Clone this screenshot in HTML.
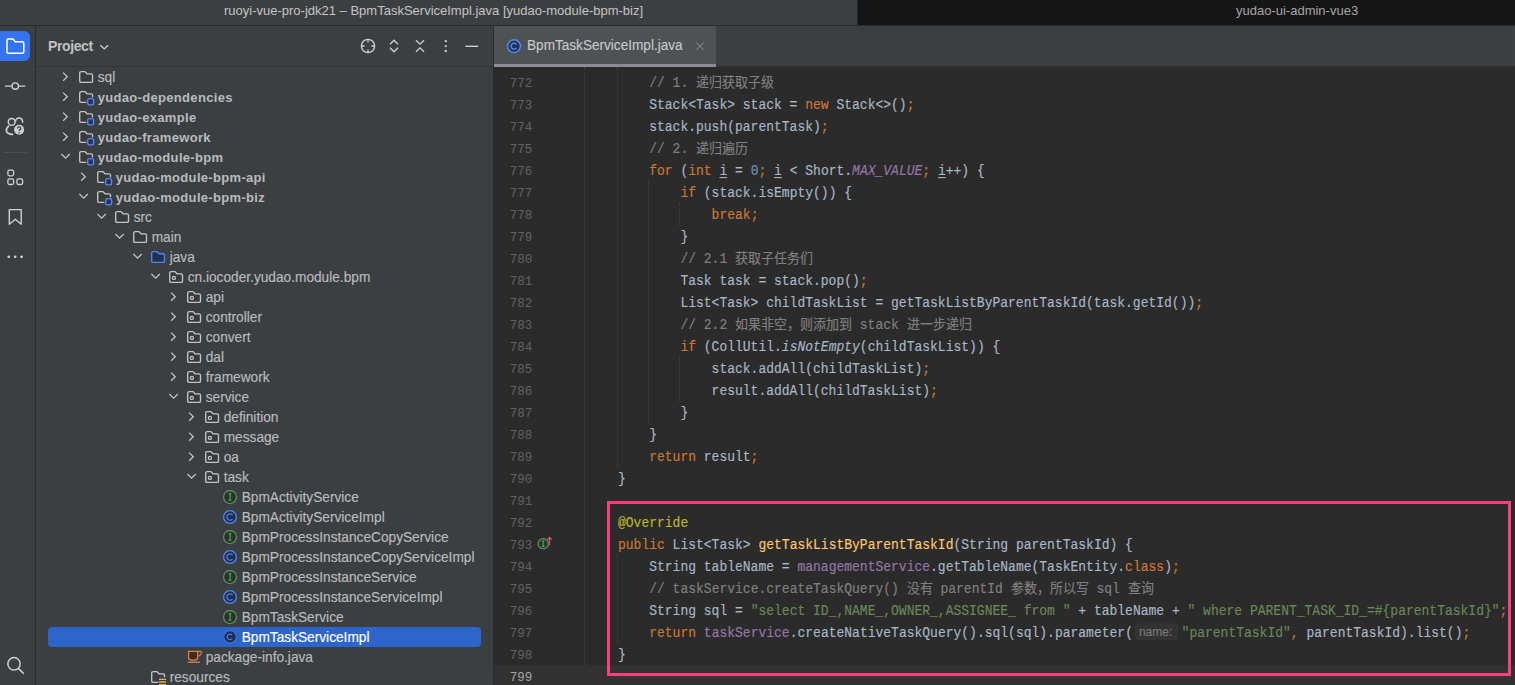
<!DOCTYPE html><html lang="zh-CN"><head><meta charset="utf-8"><style>
*{margin:0;padding:0;box-sizing:border-box}
html,body{width:1515px;height:685px;overflow:hidden;background:#2b2b2b}
body{position:relative;font-family:"Liberation Sans",sans-serif}
.abs{position:absolute}
#title{position:absolute;left:0;top:0;width:858px;height:25px;background:#3c3f41}
#title2{position:absolute;left:858px;top:0;width:657px;height:25px;background:#151515}
#tline{position:absolute;left:0;top:25px;width:1515px;height:1px;background:#2a2a2a}
.ttl{position:absolute;top:-2px;height:25px;line-height:25px;font-size:13px;color:#c4c4c4;white-space:nowrap}
#tb{position:absolute;left:0;top:26px;width:35px;height:659px;background:#3c3f41}
#tbline{position:absolute;left:35px;top:26px;width:1px;height:659px;background:#2b2b2b}
#proj{position:absolute;left:36px;top:26px;width:457px;height:659px;background:#3c3f41}
#pline{position:absolute;left:493px;top:26px;width:1px;height:659px;background:#2b2b2b}
#phline{position:absolute;left:36px;top:66px;width:457px;height:1px;background:#323435}
#tabbar{position:absolute;left:494px;top:26px;width:1021px;height:41px;background:#3c3f41}
#tab{position:absolute;left:494px;top:26px;width:222px;height:41px;background:#4e5254}
#tabul{position:absolute;left:494px;top:64px;width:222px;height:3px;background:#8a8e92}
#editor{position:absolute;left:494px;top:67px;width:1021px;height:618px;background:#2b2b2b;overflow:hidden}
.tt{position:absolute;height:20px;line-height:20px;margin-top:0.7px;transform:scaleY(1.08);transform-origin:0 14.75px;-webkit-text-stroke:0.15px currentColor;font-size:13.7px;color:#b9bbbe;white-space:nowrap}
.tt.b{font-weight:bold;font-size:13.4px;transform:none;-webkit-text-stroke:0;letter-spacing:0.32px;font-size:13.0px;color:#b9bbbe}
.tt.w{color:#ffffff}
.ic{position:absolute;width:16px;height:16px}
.rs{position:absolute;overflow:visible}
.sel{position:absolute;left:48px;width:433px;height:20px;border-radius:4px;background:#2e65ca}
.ln{position:absolute;left:494px;width:38.3px;text-align:right;font-family:"Liberation Mono",monospace;font-size:12.5px;line-height:26px;height:22px;color:#606366;white-space:pre}
.cl{position:absolute;font-family:"Liberation Mono",monospace;font-size:13px;line-height:26px;height:22px;color:#a9b7c6;white-space:pre;transform:scaleY(1.06);transform-origin:0 16.5px;-webkit-text-stroke:0.15px currentColor}
.ig{position:absolute;width:1px;border-left:1px dotted #434343}
.ln.cur{color:#a4a3a3}
.u{text-decoration:underline;text-underline-offset:2px}
.hint{display:inline-block;font-family:"Liberation Sans",sans-serif;font-size:12px;color:#7a7a7a;background:#333333;border-radius:3px;height:16px;line-height:16px;padding:0 5.5px 0 4px;margin:0 3.8px 0 2px;vertical-align:1px}
#curline{position:absolute;left:494px;top:665px;width:1021px;height:22px;background:#323232}
#gutline{position:absolute;left:584px;top:67px;width:1px;height:598px;border-left:1px dotted #424242}
#box{position:absolute;left:607px;top:500.8px;width:904px;height:174.9px;border:3.8px solid #fa3e7e}
</style></head><body>
<div id="title"></div><div id="title2"></div><div class="abs" style="left:857px;top:0;width:1px;height:25px;background:#2c2c2c"></div><div id="tline"></div>
<div class="ttl" style="left:224px">ruoyi-vue-pro-jdk21 – BpmTaskServiceImpl.java [yudao-module-bpm-biz]</div>
<div class="ttl" style="left:1236px;color:#a6a6a6">yudao-ui-admin-vue3</div>
<div id="tb"></div><div id="tbline"></div><div id="proj"></div><div id="pline"></div><div id="phline"></div>
<div id="tabbar"></div><div class="abs" style="left:716px;top:66px;width:799px;height:1px;background:#303233"></div><div class="abs" style="left:1513px;top:26px;width:1px;height:40px;background:#46494b"></div><div id="tab"></div><div id="tabul"></div>
<div id="editor"></div><div id="curline"></div><div id="gutline"></div>
<div class="abs" style="left:48px;top:36px;font-size:14px;font-weight:bold;color:#bfc1c3;line-height:20px;letter-spacing:-0.4px">Project</div>
<div class="abs" style="left:0;top:31px;width:30px;height:30px;background:#3574f0;border-radius:0 6px 6px 0"></div>
<svg class="abs" style="left:0;top:0" width="36" height="685" viewBox="0 0 36 685"><path d="M7 40.5Q7 39 8.5 39H13L15.3 41.8H22.3Q23.8 41.8 23.8 43.3V51.7Q23.8 53.2 22.3 53.2H8.5Q7 53.2 7 51.7Z" fill="none" stroke="#ffffff" stroke-width="1.5" stroke-linejoin="round"/><path d="M5 86.1H11.6M18.9 86.1H25.3" stroke="#ced0d3" stroke-width="1.4"/><circle cx="15.25" cy="86.1" r="3.2" fill="none" stroke="#ced0d3" stroke-width="1.4"/><circle cx="11.7" cy="121.9" r="3.4" fill="none" stroke="#ced0d3" stroke-width="1.5"/><path d="M15.6 121.4A3.5 3.5 0 0 1 22.6 121.4V122.8" fill="none" stroke="#ced0d3" stroke-width="1.5"/><path d="M8.6 126.2Q5.6 128.6 6.6 131.6Q7.8 134.2 12.6 134.3" fill="none" stroke="#ced0d3" stroke-width="1.7" stroke-linecap="round"/><circle cx="19.1" cy="129.8" r="5.0" fill="#ced0d3"/><path d="M17.5 128.5Q17.5 126.8 19.1 126.8Q20.8 126.8 20.8 128.4Q20.8 129.4 19.8 129.9Q19.1 130.3 19.1 131.1" fill="none" stroke="#3c3f41" stroke-width="1.3"/><circle cx="19.1" cy="132.8" r="0.8" fill="#3c3f41"/><path d="M3 152.5H28" stroke="#5b5e61" stroke-width="1" stroke-dasharray="1 1"/><rect x="7.9" y="170.2" width="5.7" height="5.6" rx="1.5" fill="none" stroke="#ced0d3" stroke-width="1.3"/><rect x="7.9" y="178.9" width="5.7" height="5.6" rx="1.5" fill="none" stroke="#ced0d3" stroke-width="1.3"/><rect x="16.9" y="178.9" width="5.7" height="5.6" rx="1.5" fill="none" stroke="#ced0d3" stroke-width="1.3"/><path d="M9.3 209.6H21.2V224.3L15.25 219.2L9.3 224.3Z" fill="none" stroke="#ced0d3" stroke-width="1.4" stroke-linejoin="round"/><circle cx="8.7" cy="256.8" r="1.35" fill="#ced0d3"/><circle cx="15.2" cy="256.8" r="1.35" fill="#ced0d3"/><circle cx="21.6" cy="256.8" r="1.35" fill="#ced0d3"/><circle cx="14" cy="663.8" r="6.2" fill="none" stroke="#ced0d3" stroke-width="1.5"/><path d="M18.6 668.6L23.3 673.3" stroke="#ced0d3" stroke-width="1.6" stroke-linecap="round"/></svg>
<svg class="abs" style="left:340px;top:26px" width="154" height="40" viewBox="340 26 154 40"><path d="M100 45.5L104 49.3L108 45.5" transform="translate(0,0)" fill="none" stroke="#ced0d3" stroke-width="1.2"/><circle cx="368" cy="46" r="6.6" fill="none" stroke="#ced0d3" stroke-width="1.3"/><path d="M368 39.4V42.5M368 49.5V52.6M361.4 46H364.5M371.5 46H374.6" stroke="#ced0d3" stroke-width="1.3"/><path d="M390 44.2L394 40.2L398 44.2M390 47.8L394 51.8L398 47.8" fill="none" stroke="#ced0d3" stroke-width="1.3"/><path d="M416 40.2L420 44.2L424 40.2M416 51.8L420 47.8L424 51.8" fill="none" stroke="#ced0d3" stroke-width="1.3"/><circle cx="445.8" cy="41.2" r="1.15" fill="#ced0d3"/><circle cx="445.8" cy="46.1" r="1.15" fill="#ced0d3"/><circle cx="445.8" cy="51" r="1.15" fill="#ced0d3"/><path d="M465.4 46.3H478.2" stroke="#ced0d3" stroke-width="1.4"/></svg>
<svg class="abs" style="left:95px;top:40px" width="16" height="12" viewBox="95 40 16 12"><path d="M100.3 45.3L104.2 49L108.1 45.3" fill="none" stroke="#ced0d3" stroke-width="1.2"/></svg>
<svg class="abs" style="left:500px;top:36px" width="30" height="22" viewBox="500 36 30 22"><circle cx="514" cy="46.2" r="6.4" fill="#243356" stroke="#548af7" stroke-width="1.45"/><path d="M516.3 44.4A2.9 2.9 0 1 0 516.3 48" fill="none" stroke="#548af7" stroke-width="1.4"/></svg>
<div class="abs" style="left:527px;top:36px;height:20px;line-height:20px;font-size:13.6px;color:#c8cacc;white-space:nowrap;transform:scaleY(1.06);transform-origin:0 14.5px;-webkit-text-stroke:0.1px currentColor">BpmTaskServiceImpl.java</div>
<svg class="abs" style="left:690px;top:38px" width="20" height="16" viewBox="690 38 20 16"><path d="M696.3 42.6L703.5 49.8M703.5 42.6L696.3 49.8" stroke="#7f8285" stroke-width="1.1"/></svg>
<svg class="abs" style="left:530px;top:530px" width="30" height="25" viewBox="530 530 30 25"><circle cx="543.2" cy="543.7" r="5.1" fill="#263828" stroke="#5e9f62" stroke-width="1.1"/><path d="M541.8 541h2.8M541.8 546.4h2.8M543.2 541v5.4" stroke="#5e9f62" stroke-width="1.1" fill="none"/><path d="M549.5 545.5V537.6M547.3 539.6L549.5 537.3L551.7 539.6" fill="none" stroke="#f0457c" stroke-width="1.2"/></svg>
<svg class="rs" style="left:58px;top:67px" width="40" height="20" viewBox="0 0 40 20"><path d="M5.1 5.6L9.3 9.7L5.1 13.8" fill="none" stroke="#c3c5c8" stroke-width="1.25"/><path d="M21.7 6.1Q21.7 4.6 23.2 4.6H27L29 6.8H33Q34.5 6.8 34.5 8.3V13.9Q34.5 15.4 33 15.4H23.2Q21.7 15.4 21.7 13.9Z" fill="#383a3c" stroke="#c3c5c8" stroke-width="1.35" stroke-linejoin="round"/></svg>
<div class="tt" style="top:67px;left:97.7px">sql</div>
<svg class="rs" style="left:58px;top:87px" width="40" height="20" viewBox="0 0 40 20"><path d="M5.1 5.6L9.3 9.7L5.1 13.8" fill="none" stroke="#c3c5c8" stroke-width="1.25"/><path d="M21.7 6.1Q21.7 4.6 23.2 4.6H27L29 6.8H33Q34.5 6.8 34.5 8.3V13.9Q34.5 15.4 33 15.4H23.2Q21.7 15.4 21.7 13.9Z" fill="#383a3c"/><path d="M28.3 15.4H23.2Q21.7 15.4 21.7 13.9V6.1Q21.7 4.6 23.2 4.6H27L29 6.8H33Q34.5 6.8 34.5 8.3V10.3" fill="none" stroke="#c3c5c8" stroke-width="1.35" stroke-linejoin="round"/><rect x="29.7" y="11.7" width="5.9" height="6.1" rx="1.6" fill="#26365a" stroke="#548af7" stroke-width="1.3"/></svg>
<div class="tt b" style="top:87px;left:97.7px">yudao-dependencies</div>
<svg class="rs" style="left:58px;top:107px" width="40" height="20" viewBox="0 0 40 20"><path d="M5.1 5.6L9.3 9.7L5.1 13.8" fill="none" stroke="#c3c5c8" stroke-width="1.25"/><path d="M21.7 6.1Q21.7 4.6 23.2 4.6H27L29 6.8H33Q34.5 6.8 34.5 8.3V13.9Q34.5 15.4 33 15.4H23.2Q21.7 15.4 21.7 13.9Z" fill="#383a3c"/><path d="M28.3 15.4H23.2Q21.7 15.4 21.7 13.9V6.1Q21.7 4.6 23.2 4.6H27L29 6.8H33Q34.5 6.8 34.5 8.3V10.3" fill="none" stroke="#c3c5c8" stroke-width="1.35" stroke-linejoin="round"/><rect x="29.7" y="11.7" width="5.9" height="6.1" rx="1.6" fill="#26365a" stroke="#548af7" stroke-width="1.3"/></svg>
<div class="tt b" style="top:107px;left:97.7px">yudao-example</div>
<svg class="rs" style="left:58px;top:127px" width="40" height="20" viewBox="0 0 40 20"><path d="M5.1 5.6L9.3 9.7L5.1 13.8" fill="none" stroke="#c3c5c8" stroke-width="1.25"/><path d="M21.7 6.1Q21.7 4.6 23.2 4.6H27L29 6.8H33Q34.5 6.8 34.5 8.3V13.9Q34.5 15.4 33 15.4H23.2Q21.7 15.4 21.7 13.9Z" fill="#383a3c"/><path d="M28.3 15.4H23.2Q21.7 15.4 21.7 13.9V6.1Q21.7 4.6 23.2 4.6H27L29 6.8H33Q34.5 6.8 34.5 8.3V10.3" fill="none" stroke="#c3c5c8" stroke-width="1.35" stroke-linejoin="round"/><rect x="29.7" y="11.7" width="5.9" height="6.1" rx="1.6" fill="#26365a" stroke="#548af7" stroke-width="1.3"/></svg>
<div class="tt b" style="top:127px;left:97.7px">yudao-framework</div>
<svg class="rs" style="left:58px;top:147px" width="40" height="20" viewBox="0 0 40 20"><path d="M3.4 7L7.6 11.2L11.8 7" fill="none" stroke="#c3c5c8" stroke-width="1.25"/><path d="M21.7 6.1Q21.7 4.6 23.2 4.6H27L29 6.8H33Q34.5 6.8 34.5 8.3V13.9Q34.5 15.4 33 15.4H23.2Q21.7 15.4 21.7 13.9Z" fill="#383a3c"/><path d="M28.3 15.4H23.2Q21.7 15.4 21.7 13.9V6.1Q21.7 4.6 23.2 4.6H27L29 6.8H33Q34.5 6.8 34.5 8.3V10.3" fill="none" stroke="#c3c5c8" stroke-width="1.35" stroke-linejoin="round"/><rect x="29.7" y="11.7" width="5.9" height="6.1" rx="1.6" fill="#26365a" stroke="#548af7" stroke-width="1.3"/></svg>
<div class="tt b" style="top:147px;left:97.7px">yudao-module-bpm</div>
<svg class="rs" style="left:76px;top:167px" width="40" height="20" viewBox="0 0 40 20"><path d="M5.1 5.6L9.3 9.7L5.1 13.8" fill="none" stroke="#c3c5c8" stroke-width="1.25"/><path d="M21.7 6.1Q21.7 4.6 23.2 4.6H27L29 6.8H33Q34.5 6.8 34.5 8.3V13.9Q34.5 15.4 33 15.4H23.2Q21.7 15.4 21.7 13.9Z" fill="#383a3c"/><path d="M28.3 15.4H23.2Q21.7 15.4 21.7 13.9V6.1Q21.7 4.6 23.2 4.6H27L29 6.8H33Q34.5 6.8 34.5 8.3V10.3" fill="none" stroke="#c3c5c8" stroke-width="1.35" stroke-linejoin="round"/><rect x="29.7" y="11.7" width="5.9" height="6.1" rx="1.6" fill="#26365a" stroke="#548af7" stroke-width="1.3"/></svg>
<div class="tt b" style="top:167px;left:115.7px">yudao-module-bpm-api</div>
<svg class="rs" style="left:76px;top:187px" width="40" height="20" viewBox="0 0 40 20"><path d="M3.4 7L7.6 11.2L11.8 7" fill="none" stroke="#c3c5c8" stroke-width="1.25"/><path d="M21.7 6.1Q21.7 4.6 23.2 4.6H27L29 6.8H33Q34.5 6.8 34.5 8.3V13.9Q34.5 15.4 33 15.4H23.2Q21.7 15.4 21.7 13.9Z" fill="#383a3c"/><path d="M28.3 15.4H23.2Q21.7 15.4 21.7 13.9V6.1Q21.7 4.6 23.2 4.6H27L29 6.8H33Q34.5 6.8 34.5 8.3V10.3" fill="none" stroke="#c3c5c8" stroke-width="1.35" stroke-linejoin="round"/><rect x="29.7" y="11.7" width="5.9" height="6.1" rx="1.6" fill="#26365a" stroke="#548af7" stroke-width="1.3"/></svg>
<div class="tt b" style="top:187px;left:115.7px">yudao-module-bpm-biz</div>
<svg class="rs" style="left:94px;top:207px" width="40" height="20" viewBox="0 0 40 20"><path d="M3.4 7L7.6 11.2L11.8 7" fill="none" stroke="#c3c5c8" stroke-width="1.25"/><path d="M21.7 6.1Q21.7 4.6 23.2 4.6H27L29 6.8H33Q34.5 6.8 34.5 8.3V13.9Q34.5 15.4 33 15.4H23.2Q21.7 15.4 21.7 13.9Z" fill="#383a3c" stroke="#c3c5c8" stroke-width="1.35" stroke-linejoin="round"/></svg>
<div class="tt" style="top:207px;left:133.7px">src</div>
<svg class="rs" style="left:112px;top:227px" width="40" height="20" viewBox="0 0 40 20"><path d="M3.4 7L7.6 11.2L11.8 7" fill="none" stroke="#c3c5c8" stroke-width="1.25"/><path d="M21.7 6.1Q21.7 4.6 23.2 4.6H27L29 6.8H33Q34.5 6.8 34.5 8.3V13.9Q34.5 15.4 33 15.4H23.2Q21.7 15.4 21.7 13.9Z" fill="#383a3c" stroke="#c3c5c8" stroke-width="1.35" stroke-linejoin="round"/></svg>
<div class="tt" style="top:227px;left:151.7px">main</div>
<svg class="rs" style="left:130px;top:247px" width="40" height="20" viewBox="0 0 40 20"><path d="M3.4 7L7.6 11.2L11.8 7" fill="none" stroke="#c3c5c8" stroke-width="1.25"/><path d="M21.7 6.1Q21.7 4.6 23.2 4.6H27L29 6.8H33Q34.5 6.8 34.5 8.3V13.9Q34.5 15.4 33 15.4H23.2Q21.7 15.4 21.7 13.9Z" fill="#22304f" stroke="#4f86ee" stroke-width="1.4" stroke-linejoin="round"/></svg>
<div class="tt" style="top:247px;left:169.7px">java</div>
<svg class="rs" style="left:148px;top:267px" width="40" height="20" viewBox="0 0 40 20"><path d="M3.4 7L7.6 11.2L11.8 7" fill="none" stroke="#c3c5c8" stroke-width="1.25"/><path d="M21.7 6.1Q21.7 4.6 23.2 4.6H27L29 6.8H33Q34.5 6.8 34.5 8.3V13.9Q34.5 15.4 33 15.4H23.2Q21.7 15.4 21.7 13.9Z" fill="#383a3c" stroke="#c3c5c8" stroke-width="1.35" stroke-linejoin="round"/><circle cx="25.9" cy="10.9" r="1.55" fill="none" stroke="#c3c5c8" stroke-width="1.25"/></svg>
<div class="tt" style="top:267px;left:187.7px">cn.iocoder.yudao.module.bpm</div>
<svg class="rs" style="left:166px;top:287px" width="40" height="20" viewBox="0 0 40 20"><path d="M5.1 5.6L9.3 9.7L5.1 13.8" fill="none" stroke="#c3c5c8" stroke-width="1.25"/><path d="M21.7 6.1Q21.7 4.6 23.2 4.6H27L29 6.8H33Q34.5 6.8 34.5 8.3V13.9Q34.5 15.4 33 15.4H23.2Q21.7 15.4 21.7 13.9Z" fill="#383a3c" stroke="#c3c5c8" stroke-width="1.35" stroke-linejoin="round"/><circle cx="25.9" cy="10.9" r="1.55" fill="none" stroke="#c3c5c8" stroke-width="1.25"/></svg>
<div class="tt" style="top:287px;left:205.7px">api</div>
<svg class="rs" style="left:166px;top:307px" width="40" height="20" viewBox="0 0 40 20"><path d="M5.1 5.6L9.3 9.7L5.1 13.8" fill="none" stroke="#c3c5c8" stroke-width="1.25"/><path d="M21.7 6.1Q21.7 4.6 23.2 4.6H27L29 6.8H33Q34.5 6.8 34.5 8.3V13.9Q34.5 15.4 33 15.4H23.2Q21.7 15.4 21.7 13.9Z" fill="#383a3c" stroke="#c3c5c8" stroke-width="1.35" stroke-linejoin="round"/><circle cx="25.9" cy="10.9" r="1.55" fill="none" stroke="#c3c5c8" stroke-width="1.25"/></svg>
<div class="tt" style="top:307px;left:205.7px">controller</div>
<svg class="rs" style="left:166px;top:327px" width="40" height="20" viewBox="0 0 40 20"><path d="M5.1 5.6L9.3 9.7L5.1 13.8" fill="none" stroke="#c3c5c8" stroke-width="1.25"/><path d="M21.7 6.1Q21.7 4.6 23.2 4.6H27L29 6.8H33Q34.5 6.8 34.5 8.3V13.9Q34.5 15.4 33 15.4H23.2Q21.7 15.4 21.7 13.9Z" fill="#383a3c" stroke="#c3c5c8" stroke-width="1.35" stroke-linejoin="round"/><circle cx="25.9" cy="10.9" r="1.55" fill="none" stroke="#c3c5c8" stroke-width="1.25"/></svg>
<div class="tt" style="top:327px;left:205.7px">convert</div>
<svg class="rs" style="left:166px;top:347px" width="40" height="20" viewBox="0 0 40 20"><path d="M5.1 5.6L9.3 9.7L5.1 13.8" fill="none" stroke="#c3c5c8" stroke-width="1.25"/><path d="M21.7 6.1Q21.7 4.6 23.2 4.6H27L29 6.8H33Q34.5 6.8 34.5 8.3V13.9Q34.5 15.4 33 15.4H23.2Q21.7 15.4 21.7 13.9Z" fill="#383a3c" stroke="#c3c5c8" stroke-width="1.35" stroke-linejoin="round"/><circle cx="25.9" cy="10.9" r="1.55" fill="none" stroke="#c3c5c8" stroke-width="1.25"/></svg>
<div class="tt" style="top:347px;left:205.7px">dal</div>
<svg class="rs" style="left:166px;top:367px" width="40" height="20" viewBox="0 0 40 20"><path d="M5.1 5.6L9.3 9.7L5.1 13.8" fill="none" stroke="#c3c5c8" stroke-width="1.25"/><path d="M21.7 6.1Q21.7 4.6 23.2 4.6H27L29 6.8H33Q34.5 6.8 34.5 8.3V13.9Q34.5 15.4 33 15.4H23.2Q21.7 15.4 21.7 13.9Z" fill="#383a3c" stroke="#c3c5c8" stroke-width="1.35" stroke-linejoin="round"/><circle cx="25.9" cy="10.9" r="1.55" fill="none" stroke="#c3c5c8" stroke-width="1.25"/></svg>
<div class="tt" style="top:367px;left:205.7px">framework</div>
<svg class="rs" style="left:166px;top:387px" width="40" height="20" viewBox="0 0 40 20"><path d="M3.4 7L7.6 11.2L11.8 7" fill="none" stroke="#c3c5c8" stroke-width="1.25"/><path d="M21.7 6.1Q21.7 4.6 23.2 4.6H27L29 6.8H33Q34.5 6.8 34.5 8.3V13.9Q34.5 15.4 33 15.4H23.2Q21.7 15.4 21.7 13.9Z" fill="#383a3c" stroke="#c3c5c8" stroke-width="1.35" stroke-linejoin="round"/><circle cx="25.9" cy="10.9" r="1.55" fill="none" stroke="#c3c5c8" stroke-width="1.25"/></svg>
<div class="tt" style="top:387px;left:205.7px">service</div>
<svg class="rs" style="left:184px;top:407px" width="40" height="20" viewBox="0 0 40 20"><path d="M5.1 5.6L9.3 9.7L5.1 13.8" fill="none" stroke="#c3c5c8" stroke-width="1.25"/><path d="M21.7 6.1Q21.7 4.6 23.2 4.6H27L29 6.8H33Q34.5 6.8 34.5 8.3V13.9Q34.5 15.4 33 15.4H23.2Q21.7 15.4 21.7 13.9Z" fill="#383a3c" stroke="#c3c5c8" stroke-width="1.35" stroke-linejoin="round"/><circle cx="25.9" cy="10.9" r="1.55" fill="none" stroke="#c3c5c8" stroke-width="1.25"/></svg>
<div class="tt" style="top:407px;left:223.7px">definition</div>
<svg class="rs" style="left:184px;top:427px" width="40" height="20" viewBox="0 0 40 20"><path d="M5.1 5.6L9.3 9.7L5.1 13.8" fill="none" stroke="#c3c5c8" stroke-width="1.25"/><path d="M21.7 6.1Q21.7 4.6 23.2 4.6H27L29 6.8H33Q34.5 6.8 34.5 8.3V13.9Q34.5 15.4 33 15.4H23.2Q21.7 15.4 21.7 13.9Z" fill="#383a3c" stroke="#c3c5c8" stroke-width="1.35" stroke-linejoin="round"/><circle cx="25.9" cy="10.9" r="1.55" fill="none" stroke="#c3c5c8" stroke-width="1.25"/></svg>
<div class="tt" style="top:427px;left:223.7px">message</div>
<svg class="rs" style="left:184px;top:447px" width="40" height="20" viewBox="0 0 40 20"><path d="M5.1 5.6L9.3 9.7L5.1 13.8" fill="none" stroke="#c3c5c8" stroke-width="1.25"/><path d="M21.7 6.1Q21.7 4.6 23.2 4.6H27L29 6.8H33Q34.5 6.8 34.5 8.3V13.9Q34.5 15.4 33 15.4H23.2Q21.7 15.4 21.7 13.9Z" fill="#383a3c" stroke="#c3c5c8" stroke-width="1.35" stroke-linejoin="round"/><circle cx="25.9" cy="10.9" r="1.55" fill="none" stroke="#c3c5c8" stroke-width="1.25"/></svg>
<div class="tt" style="top:447px;left:223.7px">oa</div>
<svg class="rs" style="left:184px;top:467px" width="40" height="20" viewBox="0 0 40 20"><path d="M3.4 7L7.6 11.2L11.8 7" fill="none" stroke="#c3c5c8" stroke-width="1.25"/><path d="M21.7 6.1Q21.7 4.6 23.2 4.6H27L29 6.8H33Q34.5 6.8 34.5 8.3V13.9Q34.5 15.4 33 15.4H23.2Q21.7 15.4 21.7 13.9Z" fill="#383a3c" stroke="#c3c5c8" stroke-width="1.35" stroke-linejoin="round"/><circle cx="25.9" cy="10.9" r="1.55" fill="none" stroke="#c3c5c8" stroke-width="1.25"/></svg>
<div class="tt" style="top:467px;left:223.7px">task</div>
<svg class="rs" style="left:202px;top:487px" width="40" height="20" viewBox="0 0 40 20"><circle cx="28" cy="10" r="6.45" fill="#243526" stroke="#5a9a5e" stroke-width="1.15"/><path d="M26.6 6.9h2.8M26.6 13.1h2.8M28 6.9v6.2" stroke="#5a9a5e" stroke-width="1.15" fill="none"/></svg>
<div class="tt" style="top:487px;left:241.7px">BpmActivityService</div>
<svg class="rs" style="left:202px;top:507px" width="40" height="20" viewBox="0 0 40 20"><circle cx="28" cy="10" r="6.4" fill="#223050" stroke="#4f86ee" stroke-width="1.3"/><path d="M30.5 7.9A3.2 3.2 0 1 0 30.5 12.1" fill="none" stroke="#4f86ee" stroke-width="1.2"/></svg>
<div class="tt" style="top:507px;left:241.7px">BpmActivityServiceImpl</div>
<svg class="rs" style="left:202px;top:527px" width="40" height="20" viewBox="0 0 40 20"><circle cx="28" cy="10" r="6.45" fill="#243526" stroke="#5a9a5e" stroke-width="1.15"/><path d="M26.6 6.9h2.8M26.6 13.1h2.8M28 6.9v6.2" stroke="#5a9a5e" stroke-width="1.15" fill="none"/></svg>
<div class="tt" style="top:527px;left:241.7px">BpmProcessInstanceCopyService</div>
<svg class="rs" style="left:202px;top:547px" width="40" height="20" viewBox="0 0 40 20"><circle cx="28" cy="10" r="6.4" fill="#223050" stroke="#4f86ee" stroke-width="1.3"/><path d="M30.5 7.9A3.2 3.2 0 1 0 30.5 12.1" fill="none" stroke="#4f86ee" stroke-width="1.2"/></svg>
<div class="tt" style="top:547px;left:241.7px">BpmProcessInstanceCopyServiceImpl</div>
<svg class="rs" style="left:202px;top:567px" width="40" height="20" viewBox="0 0 40 20"><circle cx="28" cy="10" r="6.45" fill="#243526" stroke="#5a9a5e" stroke-width="1.15"/><path d="M26.6 6.9h2.8M26.6 13.1h2.8M28 6.9v6.2" stroke="#5a9a5e" stroke-width="1.15" fill="none"/></svg>
<div class="tt" style="top:567px;left:241.7px">BpmProcessInstanceService</div>
<svg class="rs" style="left:202px;top:587px" width="40" height="20" viewBox="0 0 40 20"><circle cx="28" cy="10" r="6.4" fill="#223050" stroke="#4f86ee" stroke-width="1.3"/><path d="M30.5 7.9A3.2 3.2 0 1 0 30.5 12.1" fill="none" stroke="#4f86ee" stroke-width="1.2"/></svg>
<div class="tt" style="top:587px;left:241.7px">BpmProcessInstanceServiceImpl</div>
<svg class="rs" style="left:202px;top:607px" width="40" height="20" viewBox="0 0 40 20"><circle cx="28" cy="10" r="6.45" fill="#243526" stroke="#5a9a5e" stroke-width="1.15"/><path d="M26.6 6.9h2.8M26.6 13.1h2.8M28 6.9v6.2" stroke="#5a9a5e" stroke-width="1.15" fill="none"/></svg>
<div class="tt" style="top:607px;left:241.7px">BpmTaskService</div>
<div class="sel" style="top:627px"></div>
<svg class="rs" style="left:202px;top:627px" width="40" height="20" viewBox="0 0 40 20"><circle cx="28" cy="9.9" r="6.6" fill="#3a73e6"/><circle cx="28" cy="9.9" r="5.6" fill="#1f2b48"/><path d="M30.2 8.1A2.8 2.8 0 1 0 30.2 11.7" fill="none" stroke="#4a80ee" stroke-width="1.2"/></svg>
<div class="tt w" style="top:627px;left:241.7px">BpmTaskServiceImpl</div>
<svg class="rs" style="left:166px;top:647px" width="40" height="20" viewBox="0 0 40 20"><path d="M22.5 4.3H31.7V10.2A3 3 0 0 1 28.7 13.2H25.5A3 3 0 0 1 22.5 10.2Z" fill="#3c2e24" stroke="#d9804e" stroke-width="1.3" stroke-linejoin="round"/><path d="M31.7 4.4H34.3Q35.8 4.4 35.3 5.9L34.7 7.4Q34.1 8.9 31.8 9.1" fill="none" stroke="#d9804e" stroke-width="1.15" stroke-linejoin="round"/><path d="M21.9 15.2H33.9" stroke="#d9804e" stroke-width="1.3"/></svg>
<div class="tt" style="top:647px;left:205.7px">package-info.java</div>
<svg class="rs" style="left:130px;top:667px" width="40" height="20" viewBox="0 0 40 20"><path d="M28.3 15.4H23.2Q21.7 15.4 21.7 13.9V6.1Q21.7 4.6 23.2 4.6H27L29 6.8H33Q34.5 6.8 34.5 8.3V10.3" fill="none" stroke="#c3c5c8" stroke-width="1.35" stroke-linejoin="round"/><path d="M29 12.4H36M29 15H36M29 17.6H36" stroke="#e0b55c" stroke-width="1.35"/></svg>
<div class="tt" style="top:667px;left:169.7px">resources</div>
<div class="ig" style="left:616.5px;top:67px;height:400px"></div>
<div class="ig" style="left:647.7px;top:181px;height:242px"></div>
<div class="ig" style="left:678.9px;top:203px;height:22px"></div>
<div class="ig" style="left:678.9px;top:357px;height:44px"></div>
<div class="ig" style="left:616.5px;top:555px;height:88px"></div>
<div class="ln" style="top:71px">772</div>
<div class="cl" style="top:71px;left:649.2px"><span style="color:#808080">// 1. 递归获取子级</span></div>
<div class="ln" style="top:93px">773</div>
<div class="cl" style="top:93px;left:649.2px">Stack&lt;Task&gt; stack = <span style="color:#cc7832">new</span> Stack&lt;&gt;()<span style="color:#cc7832">;</span></div>
<div class="ln" style="top:115px">774</div>
<div class="cl" style="top:115px;left:649.2px">stack.push(parentTask)<span style="color:#cc7832">;</span></div>
<div class="ln" style="top:137px">775</div>
<div class="cl" style="top:137px;left:649.2px"><span style="color:#808080">// 2. 递归遍历</span></div>
<div class="ln" style="top:159px">776</div>
<div class="cl" style="top:159px;left:649.2px"><span style="color:#cc7832">for</span> (<span style="color:#cc7832">int</span> <span class="u">i</span> = <span style="color:#6897bb">0</span><span style="color:#cc7832">;</span> <span class="u">i</span> &lt; Short.<span style="color:#9876aa;font-style:italic">MAX_VALUE</span><span style="color:#cc7832">;</span> <span class="u">i</span>++) {</div>
<div class="ln" style="top:181px">777</div>
<div class="cl" style="top:181px;left:649.2px">    <span style="color:#cc7832">if</span> (stack.isEmpty()) {</div>
<div class="ln" style="top:203px">778</div>
<div class="cl" style="top:203px;left:649.2px">        <span style="color:#cc7832">break</span><span style="color:#cc7832">;</span></div>
<div class="ln" style="top:225px">779</div>
<div class="cl" style="top:225px;left:649.2px">    }</div>
<div class="ln" style="top:247px">780</div>
<div class="cl" style="top:247px;left:649.2px">    <span style="color:#808080">// 2.1 获取子任务们</span></div>
<div class="ln" style="top:269px">781</div>
<div class="cl" style="top:269px;left:649.2px">    Task task = stack.pop()<span style="color:#cc7832">;</span></div>
<div class="ln" style="top:291px">782</div>
<div class="cl" style="top:291px;left:649.2px">    List&lt;Task&gt; childTaskList = getTaskListByParentTaskId(task.getId())<span style="color:#cc7832">;</span></div>
<div class="ln" style="top:313px">783</div>
<div class="cl" style="top:313px;left:649.2px">    <span style="color:#808080">// 2.2 如果非空，则添加到 stack 进一步递归</span></div>
<div class="ln" style="top:335px">784</div>
<div class="cl" style="top:335px;left:649.2px">    <span style="color:#cc7832">if</span> (CollUtil.<span style="font-style:italic">isNotEmpty</span>(childTaskList)) {</div>
<div class="ln" style="top:357px">785</div>
<div class="cl" style="top:357px;left:649.2px">        stack.addAll(childTaskList)<span style="color:#cc7832">;</span></div>
<div class="ln" style="top:379px">786</div>
<div class="cl" style="top:379px;left:649.2px">        result.addAll(childTaskList)<span style="color:#cc7832">;</span></div>
<div class="ln" style="top:401px">787</div>
<div class="cl" style="top:401px;left:649.2px">    }</div>
<div class="ln" style="top:423px">788</div>
<div class="cl" style="top:423px;left:649.2px">}</div>
<div class="ln" style="top:445px">789</div>
<div class="cl" style="top:445px;left:649.2px"><span style="color:#cc7832">return</span> result<span style="color:#cc7832">;</span></div>
<div class="ln" style="top:467px">790</div>
<div class="cl" style="top:467px;left:618.0px">}</div>
<div class="ln" style="top:489px">791</div>
<div class="cl" style="top:489px;left:586.8px"></div>
<div class="ln" style="top:511px">792</div>
<div class="cl" style="top:511px;left:618.0px"><span style="color:#bbb529">@Override</span></div>
<div class="ln" style="top:533px">793</div>
<div class="cl" style="top:533px;left:618.0px"><span style="color:#cc7832">public</span> List&lt;Task&gt; <span style="color:#ffc66d">getTaskListByParentTaskId</span>(String parentTaskId) {</div>
<div class="ln" style="top:555px">794</div>
<div class="cl" style="top:555px;left:618.0px">    String tableName = <span style="color:#9876aa">managementService</span>.getTableName(TaskEntity.<span style="color:#cc7832">class</span>)<span style="color:#cc7832">;</span></div>
<div class="ln" style="top:577px">795</div>
<div class="cl" style="top:577px;left:618.0px">    <span style="color:#808080">// taskService.createTaskQuery() 没有 parentId 参数，所以写 sql 查询</span></div>
<div class="ln" style="top:599px">796</div>
<div class="cl" style="top:599px;left:618.0px">    String sql = <span style="color:#6a8759">"select ID_,NAME_,OWNER_,ASSIGNEE_ from "</span> + tableName + <span style="color:#6a8759">" where PARENT_TASK_ID_=#{parentTaskId}"</span><span style="color:#cc7832">;</span></div>
<div class="ln" style="top:621px">797</div>
<div class="cl" style="top:621px;left:618.0px">    <span style="color:#cc7832">return</span> <span style="color:#9876aa">taskService</span>.createNativeTaskQuery().sql(sql).parameter(<span class="hint">name:</span><span style="color:#6a8759">"parentTaskId"</span><span style="color:#cc7832">,</span> parentTaskId).list()<span style="color:#cc7832">;</span></div>
<div class="ln" style="top:643px">798</div>
<div class="cl" style="top:643px;left:618.0px">}</div>
<div class="ln cur" style="top:665px">799</div>
<div class="cl" style="top:665px;left:586.8px"></div>
<div id="box"></div>
</body></html>
